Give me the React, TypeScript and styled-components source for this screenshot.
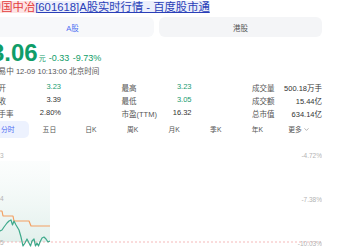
import React from 'react';
import styled, { createGlobalStyle } from 'styled-components';
import { ChevronDown } from 'lucide-react';

const GlobalStyle = createGlobalStyle`
  html, body {
    margin: 0;
    padding: 0;
    background: #fff;
    overflow: hidden;
  }

  body {
    font-family: "Liberation Sans", "Noto Sans CJK SC", sans-serif;
    color: #333;
  }
`;

const Page = styled.div`
  width: 331px;
  margin-left: -9px;
  display: flex;
  flex-direction: column;
`;

const Title = styled.div`
  font-size: 11.3px;
  line-height: 14px;
  white-space: nowrap;
  margin-left: -1px;
`;

const Hit = styled.span`
  color: #e23c3c;
  background: #fde3e3;
`;

const TitleLink = styled.span`
  color: #2a3fb8;
  background: #eceffb;
  text-decoration: underline;
`;

const MarketTabs = styled.div`
  display: flex;
  gap: 5px;
  margin-top: 3px;
`;

const MarketTab = styled.div<{ $active?: boolean }>`
  flex: 1;
  height: 20px;
  display: flex;
  align-items: center;
  justify-content: center;
  border-radius: 6px;
  font-size: 7.5px;
  background: ${(p) => (p.$active ? '#f7f8fa' : '#f4f5f7')};
  color: ${(p) => (p.$active ? '#4e6ef2' : '#555')};
`;

const PriceRow = styled.div`
  display: flex;
  align-items: baseline;
  margin-top: 4px;
  color: #0f9d69;
  white-space: nowrap;
`;

const Price = styled.span`
  font-size: 24px;
  line-height: 24px;
  font-weight: bold;
`;

const Unit = styled.span`
  font-size: 7px;
  margin: 0 3px 0 1px;
`;

const Change = styled.span`
  font-size: 9px;
  word-spacing: 1px;
`;

const Stamp = styled.div`
  margin-top: 2px;
  font-size: 7.6px;
  line-height: 10px;
  color: #555;
  white-space: nowrap;
`;

const StatsGrid = styled.div`
  margin-top: 3.5px;
  display: flex;
  flex-direction: column;
`;

const StatsRow = styled.div`
  display: flex;
  justify-content: space-between;
  height: 13px;
  align-items: center;
`;

const Stat = styled.div`
  width: 70px;
  display: flex;
  justify-content: space-between;
  font-size: 7.5px;
  white-space: nowrap;
`;

const StatLabel = styled.span`
  color: #555;
`;

const StatValue = styled.span<{ $green?: boolean }>`
  color: ${(p) => (p.$green ? '#1a9b70' : '#333')};
`;

const Periods = styled.div`
  display: grid;
  grid-template-columns: repeat(8, 41.6px);
  margin: 1px 0 0 -4px;
`;

const Period = styled.div<{ $active?: boolean }>`
  height: 17px;
  display: flex;
  align-items: center;
  justify-content: center;
  gap: 1px;
  border-radius: 5px;
  font-size: 6.8px;
  background: ${(p) => (p.$active ? '#edf2fe' : 'transparent')};
  color: ${(p) => (p.$active ? '#4e6ef2' : '#555')};
`;

const Chart = styled.svg`
  display: block;
  margin-top: 10px;
`;

const stats = [
  [
    ['今开', '3.23', true],
    ['最高', '3.23', true],
    ['成交量', '500.18万手', false],
  ],
  [
    ['昨收', '3.39', false],
    ['最低', '3.05', true],
    ['成交额', '15.44亿', false],
  ],
  [
    ['换手率', '2.80%', false],
    ['市盈(TTM)', '16.32', false],
    ['总市值', '634.14亿', false],
  ],
] as const;

const periods = ['分时', '五日', '日K', '周K', '月K', '季K', '年K'];

const pricePts =
  '-9,224 -4,228 0,230 2,229 4,226 7,222 9,220 11,219 12.5,224 14,220 16,224 19,229 21,236 23,245 25,242 27,238 29,242 30.5,245 32,240 34,238 35.5,245 37,242 38.5,245 40,241 42,237 44,236 46,238 48,241 50,240';
const avgPts = '-9,207 0,210 2,210 3,215 13,215 14,220 29,220 31,225 50,225';

const axisLeft = [
  ['3.23', 155],
  ['3.14', 198],
  ['3.05', 242],
] as const;

const axisRight = [
  ['-4.72%', 155],
  ['-7.38%', 199],
  ['-10.03%', 243],
] as const;

export default function App() {
  return (
    <>
      <GlobalStyle />
      <Page>
        <Title>
          <Hit>中国中冶</Hit>
          <TitleLink>[601618]A股实时行情 - 百度股市通</TitleLink>
        </Title>

        <MarketTabs>
          <MarketTab $active>A股</MarketTab>
          <MarketTab>港股</MarketTab>
        </MarketTabs>

        <PriceRow>
          <Price>3.06</Price>
          <Unit>元</Unit>
          <Change>-0.33 -9.73%</Change>
        </PriceRow>
        <Stamp>交易中 12-09 10:13:00 北京时间</Stamp>

        <StatsGrid>
          {stats.map((row, i) => (
            <StatsRow key={i}>
              {row.map(([label, value, green]) => (
                <Stat key={label}>
                  <StatLabel>{label}</StatLabel>
                  <StatValue $green={green}>{value}</StatValue>
                </Stat>
              ))}
            </StatsRow>
          ))}
        </StatsGrid>

        <Periods>
          {periods.map((p, i) => (
            <Period key={p} $active={i === 0}>
              {p}
            </Period>
          ))}
          <Period>
            更多
            <ChevronDown size={7} strokeWidth={1.5} />
          </Period>
        </Periods>

        <Chart width={331} height={103} viewBox='-9 147 331 103'>
          <defs>
            <linearGradient id='area' x1='0' y1='0' x2='0' y2='1'>
              <stop offset='0' stopColor='#eef6f4' stopOpacity='0.2' />
              <stop offset='1' stopColor='#e2f0ec' stopOpacity='1' />
            </linearGradient>
          </defs>
          <rect x={-9} y={160} width={59} height={81} fill='url(#area)' />
          <line
            x1={-9}
            y1={241}
            x2={322}
            y2={241}
            stroke='#f3a7a7'
            strokeWidth={0.8}
            strokeDasharray='2 2'
          />
          <polyline
            points={avgPts}
            fill='none'
            stroke='#f3a062'
            strokeWidth={1.2}
            strokeLinejoin='round'
          />
          <polyline
            points={pricePts}
            fill='none'
            stroke='#3fa98b'
            strokeWidth={1.2}
            strokeLinejoin='round'
          />
          {axisLeft.map(([t, y]) => (
            <text
              key={t}
              x={3.5}
              y={y}
              fontSize={6.5}
              fill='#b3b3b3'
              textAnchor='end'
              dominantBaseline='middle'
            >
              {t}
            </text>
          ))}
          {axisRight.map(([t, y]) => (
            <text
              key={t}
              x={322}
              y={y}
              fontSize={6.5}
              fill='#b3b3b3'
              textAnchor='end'
              dominantBaseline='middle'
            >
              {t}
            </text>
          ))}
        </Chart>
      </Page>
    </>
  );
}
